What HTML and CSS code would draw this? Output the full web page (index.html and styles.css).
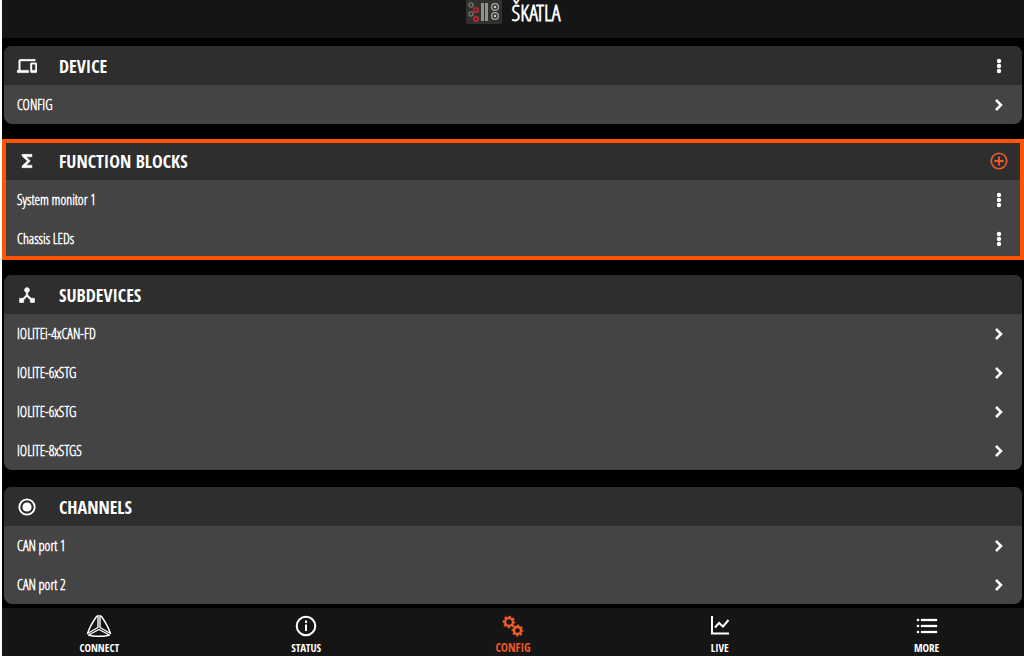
FILE: index.html
```html
<!DOCTYPE html>
<html lang="en">
<head>
    <meta charset="UTF-8">
    <meta name="viewport" content="width=device-width, initial-scale=1">
    <title>ŠKATLA - Config</title>
    <link rel="stylesheet" href="styles.css">
</head>
<body>
    <!-- Shared icons -->
    <svg class="sprite" aria-hidden="true">
        <symbol id="dots" viewBox="0 0 20 20">
            <circle cx="10" cy="5" r="2.2"/><circle cx="10" cy="10" r="2.2"/><circle cx="10" cy="15" r="2.2"/>
        </symbol>
        <symbol id="chevron" viewBox="0 0 20 20">
            <path d="M7 5l5 5-5 5" fill="none" stroke="currentColor" stroke-width="2.500"/>
        </symbol>
    </svg>

    <header class="topbar">
        <svg class="device-pic" viewBox="0 0 36 28">
            <rect width="36" height="28" rx="2" fill="#30302f"/>
            <g fill="none" stroke-width="1.3">
                <g stroke="#777"><circle cx="5" cy="9" r="2.1"/><circle cx="5" cy="18" r="2.1"/></g>
                <g stroke="#c9252d" stroke-width="1.6"><circle cx="10" cy="14" r="2.1"/><circle cx="10" cy="23" r="2.1"/></g>
                <g stroke="#aaa79f"><circle cx="29" cy="11" r="3.4"/><circle cx="29" cy="20" r="3.4"/></g>
            </g>
            <path d="M15 7h3v18h-3zM19 7h3v18h-3z" fill="#93918a"/>
            <circle cx="29" cy="11" r="1.3" fill="#ccc"/><circle cx="29" cy="20" r="1.3" fill="#ccc"/>
        </svg>
        <h1>ŠKATLA</h1>
    </header>

    <main class="content">
        <section class="card">
            <div class="card-header">
                <svg class="icon" viewBox="0 0 24 24"><path d="M4 6h18V4H4c-1.100 0-2 .9-2 2v11H0v3h14v-3H4V6zm19 2h-6c-.55 0-1 .45-1 1v10c0 .55.45 1 1 1h6c.55 0 1-.45 1-1V9c0-.55-.45-1-1-1zm-1 9h-4v-7h4v7z" stroke="currentColor" stroke-width=".4"/></svg>
                <h2>DEVICE</h2>
                <button class="action" aria-label="Device options"><svg><use href="#dots"/></svg></button>
            </div>
            <a class="row" href="#">CONFIG<svg><use href="#chevron"/></svg></a>
        </section>

        <section class="card highlighted">
            <div class="card-header">
                <svg class="icon" viewBox="0 0 24 24"><path d="M18 4H6v2l6.500 6L6 18v2h12v-3h-7l5-5-5-5h7z" stroke="currentColor" stroke-width=".6"/></svg>
                <h2>FUNCTION BLOCKS</h2>
                <button class="action add" aria-label="Add function block">
                    <svg viewBox="0 0 24 24"><g fill="none" stroke="currentColor" stroke-width="2"><circle cx="12" cy="12" r="9.300"/><path d="M12 6.500v11M6.500 12h11" stroke-width="2.200"/></g></svg>
                </button>
            </div>
            <div class="row">System monitor 1<button class="action" aria-label="System monitor 1 options"><svg><use href="#dots"/></svg></button></div>
            <div class="row">Chassis LEDs<button class="action" aria-label="Chassis LEDs options"><svg><use href="#dots"/></svg></button></div>
        </section>

        <section class="card">
            <div class="card-header">
                <svg class="icon" viewBox="0 0 24 24"><path d="M17 16l-4-4V8.820C14.160 8.400 15 7.300 15 6c0-1.660-1.340-3-3-3S9 4.340 9 6c0 1.300.84 2.400 2 2.820V12l-4 4H3v5h5v-3.050l4-4.200 4 4.200V21h5v-5h-4z" stroke="currentColor" stroke-width=".6"/></svg>
                <h2>SUBDEVICES</h2>
            </div>
            <a class="row" href="#">IOLITEi-4xCAN-FD<svg><use href="#chevron"/></svg></a>
            <a class="row" href="#">IOLITE-6xSTG<svg><use href="#chevron"/></svg></a>
            <a class="row" href="#">IOLITE-6xSTG<svg><use href="#chevron"/></svg></a>
            <a class="row" href="#">IOLITE-8xSTGS<svg><use href="#chevron"/></svg></a>
        </section>

        <section class="card">
            <div class="card-header">
                <svg class="icon" viewBox="0 0 24 24"><circle cx="12" cy="12" r="9.200" fill="none" stroke="currentColor" stroke-width="2.200"/><circle cx="12" cy="12" r="5.500"/></svg>
                <h2>CHANNELS</h2>
            </div>
            <a class="row" href="#">CAN port 1<svg><use href="#chevron"/></svg></a>
            <a class="row" href="#">CAN port 2<svg><use href="#chevron"/></svg></a>
        </section>
    </main>

    <nav class="tabbar">
        <a href="#">
            <svg viewBox="0 0 26 24"><g fill="none" stroke="currentColor" stroke-width="1.400" stroke-linejoin="round"><path d="M12 1.500L10.500 2.500C7 7.500 3.500 13.500 1.500 19.500L12 13.500z"/><path d="M14 1.500L15.500 2.500C19 7.500 22.500 13.500 24.500 19.500L14 13.500z"/><path d="M13 15.500L2.500 21c4.500 1.700 16.500 1.700 21 0z"/></g></svg>
            CONNECT
        </a>
        <a href="#">
            <svg viewBox="0 0 24 24"><circle cx="12" cy="12" r="9.300" fill="none" stroke="currentColor" stroke-width="2"/><path d="M11 6.500h2V9h-2zM11 10.500h2V17h-2z"/></svg>
            STATUS
        </a>
        <a href="#" class="active">
            <svg viewBox="0 0 24 24">
                <g fill="none" stroke="currentColor">
                    <circle cx="8" cy="8" r="3.900" stroke-width="2.400"/><circle cx="8" cy="8" r="5.400" stroke-width="1.800" stroke-dasharray="2.500 1.741" stroke-dashoffset="1.250"/>
                    <circle cx="16.500" cy="16.500" r="3.500" stroke-width="2.400"/><circle cx="16.500" cy="16.500" r="5" stroke-width="1.800" stroke-dasharray="2.300 1.627" stroke-dashoffset="1.150"/>
                </g>
            </svg>
            CONFIG
        </a>
        <a href="#">
            <svg viewBox="0 0 24 24"><g fill="none" stroke="currentColor" stroke-width="2"><path d="M4 2v17.500h17"/><path d="M7 13.500l4-4.500 4 3.500L20.500 6"/></g></svg>
            LIVE
        </a>
        <a href="#">
            <svg viewBox="0 0 24 24"><path d="M2 5h2v2H2zM6 5h16v2H6zM2 11h2v2H2zM6 11h16v2H6zM2 17h2v2H2zM6 17h16v2H6z" stroke="currentColor" stroke-width=".3"/></svg>
            MORE
        </a>
    </nav>
</body>
</html>
```
FILE: styles.css
```css
:root {
    --bar-bg: #151515;
    --header-bg: #2e2e2e;
    --card-bg: #444;
    --accent: #f15a29;
    --highlight: #ff5500;
    --text-color: #fff;
    --text-font: "Open Sans Condensed Light", "Open Sans Condensed", "Open Sans", sans-serif;
    --title-font: "Open Sans Condensed", "Open Sans", sans-serif;
}

* {
    margin: 0;
    padding: 0;
    box-sizing: border-box;
}

body {
    display: flex;
    flex-direction: column;
    height: 100vh;
    overflow: hidden;
    border-left: 2px solid #fff;
    background-color: #000;
    color: var(--text-color);
    font-family: var(--text-font);
    font-size: 14px;
    font-weight: bold;
}

svg {
    fill: currentColor;
    flex: none;
}

.sprite {
    position: absolute;
    width: 0;
    height: 0;
}

.topbar {
    flex: none;
    display: flex;
    justify-content: center;
    align-items: flex-end;
    gap: 10px;
    height: 38px;
    padding-bottom: 14px;
    background-color: var(--bar-bg);
}

.topbar h1 {
    font-size: 22px;
    line-height: 24px;
}

.device-pic {
    width: 36px;
    height: 28px;
}

.content {
    flex: 1;
    display: flex;
    flex-direction: column;
    gap: 17px;
    min-height: 0;
    padding: 8px 2px 0;
    overflow: hidden;
}

.card {
    flex: none;
    position: relative;
    border-radius: 8px;
    background: var(--card-bg);
}

.card-header,
.row {
    display: flex;
    align-items: center;
    height: 39px;
    padding: 0 13px;
}

.card-header {
    border-radius: 8px 8px 0 0;
    background-color: var(--header-bg);
}

.card-header h2 {
    flex: 1;
    margin-left: 22px;
    font-family: var(--title-font);
    font-size: 18px;
}

.icon {
    width: 20px;
    height: 20px;
}

.row {
    justify-content: space-between;
    color: var(--text-color);
    text-decoration: none;
}

.row svg,
.action svg {
    display: block;
    width: 20px;
    height: 20px;
}

.action {
    border: none;
    background: none;
    color: var(--text-color);
    cursor: pointer;
}

.action.add {
    color: var(--accent);
}

/* Frame drawn over the selected card */
.highlighted::after {
    content: "";
    position: absolute;
    inset: -2px;
    border: 4px solid var(--highlight);
    pointer-events: none;
}

.tabbar {
    flex: none;
    display: flex;
    height: 48px;
    padding-top: 6px;
    background-color: var(--bar-bg);
}

.tabbar a {
    flex: 1;
    display: flex;
    flex-direction: column;
    align-items: center;
    gap: 3px;
    color: var(--text-color);
    font-family: var(--title-font);
    font-size: 11px;
    line-height: 14px;
    text-decoration: none;
}

/* Outer tabs reach slightly past the edges */
.tabbar a:first-child {
    margin-left: -6px;
}

.tabbar a:last-child {
    margin-right: -6px;
}

.tabbar svg {
    width: 26px;
    height: 24px;
}

.tabbar a.active {
    color: var(--accent);
    font-size: 12px;
}
```
